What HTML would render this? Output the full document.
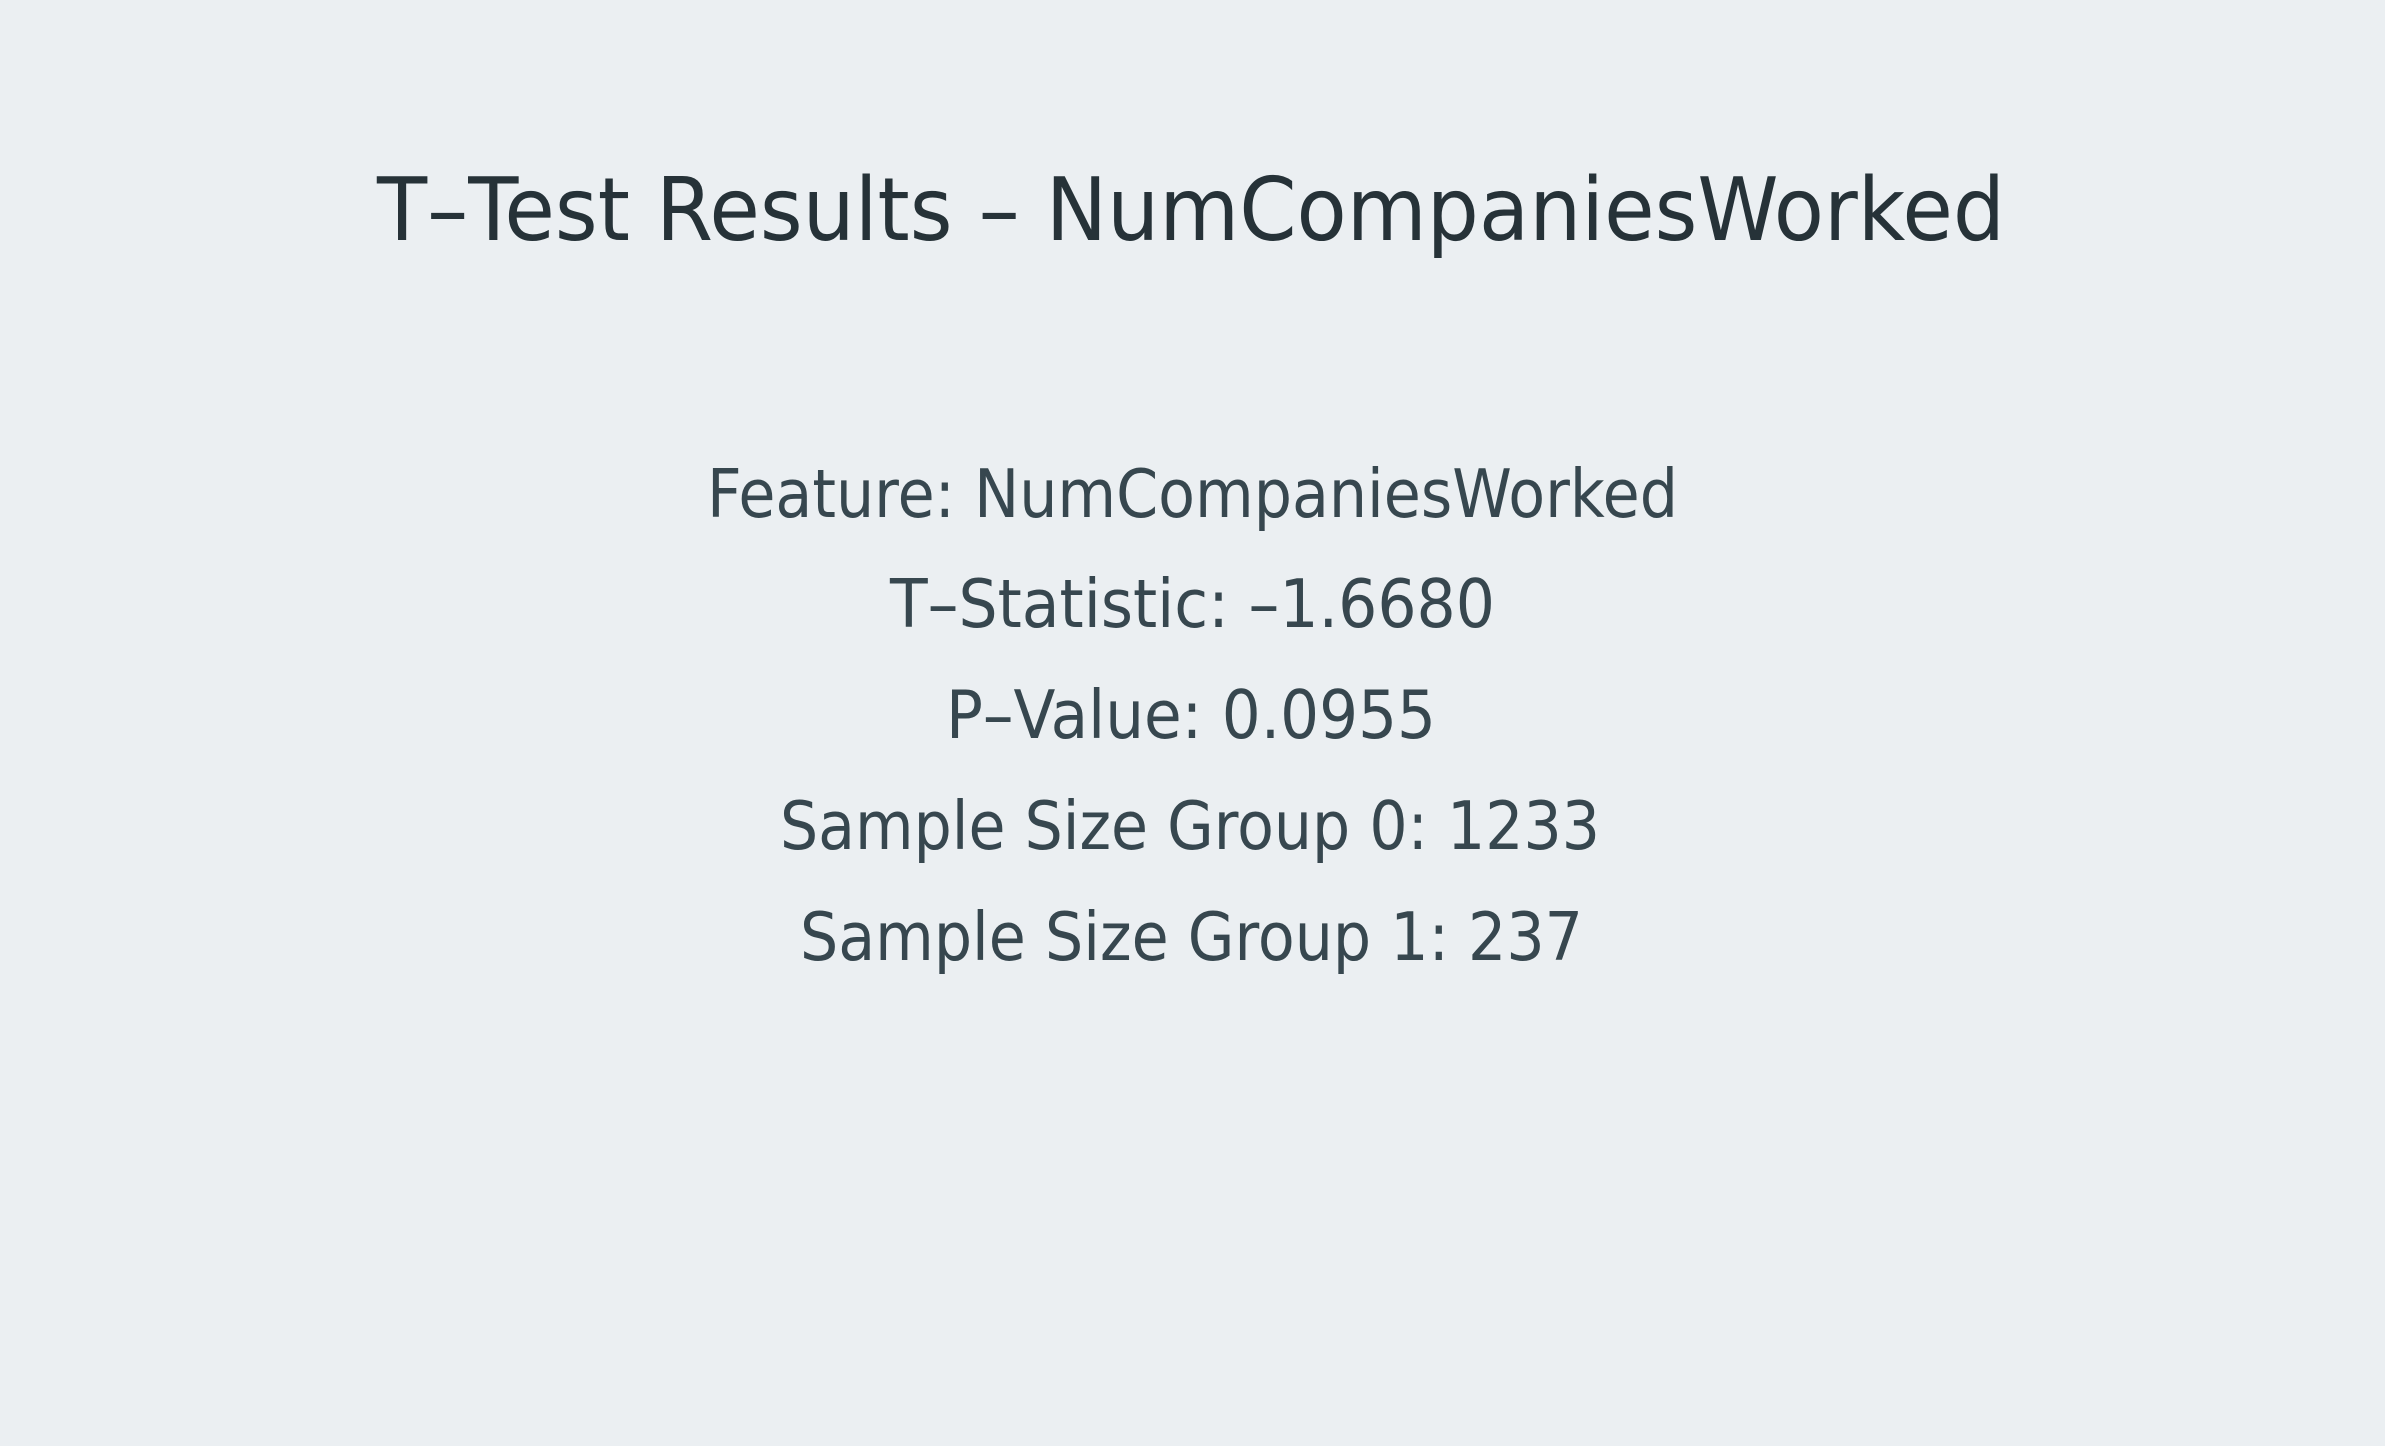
<!DOCTYPE html>
<html><head><meta charset="utf-8"><style>
html,body{margin:0;padding:0;background:#ebeff2;width:2385px;height:1446px;overflow:hidden}
svg{display:block}
text{font-family:"DejaVu Sans","Liberation Sans",sans-serif}
</style></head><body>
<svg width="2385" height="1446" viewBox="0 0 2385 1446">
<rect width="2385" height="1446" fill="#ebeff2"/>
<text x="377" y="240" font-size="87" fill="#263238" textLength="1628" lengthAdjust="spacingAndGlyphs">T–Test Results – NumCompaniesWorked</text>
<g font-size="67" fill="#37474f">
<text x="707" y="517" textLength="971" lengthAdjust="spacingAndGlyphs">Feature: NumCompaniesWorked</text>
<text x="890" y="627" textLength="605" lengthAdjust="spacingAndGlyphs">T–Statistic: –1.6680</text>
<text x="946" y="738" textLength="490" lengthAdjust="spacingAndGlyphs">P–Value: 0.0955</text>
<text x="780" y="849" textLength="820" lengthAdjust="spacingAndGlyphs">Sample Size Group 0: 1233</text>
<text x="800" y="960" textLength="783" lengthAdjust="spacingAndGlyphs">Sample Size Group 1: 237</text>
</g>
</svg>
</body></html>
